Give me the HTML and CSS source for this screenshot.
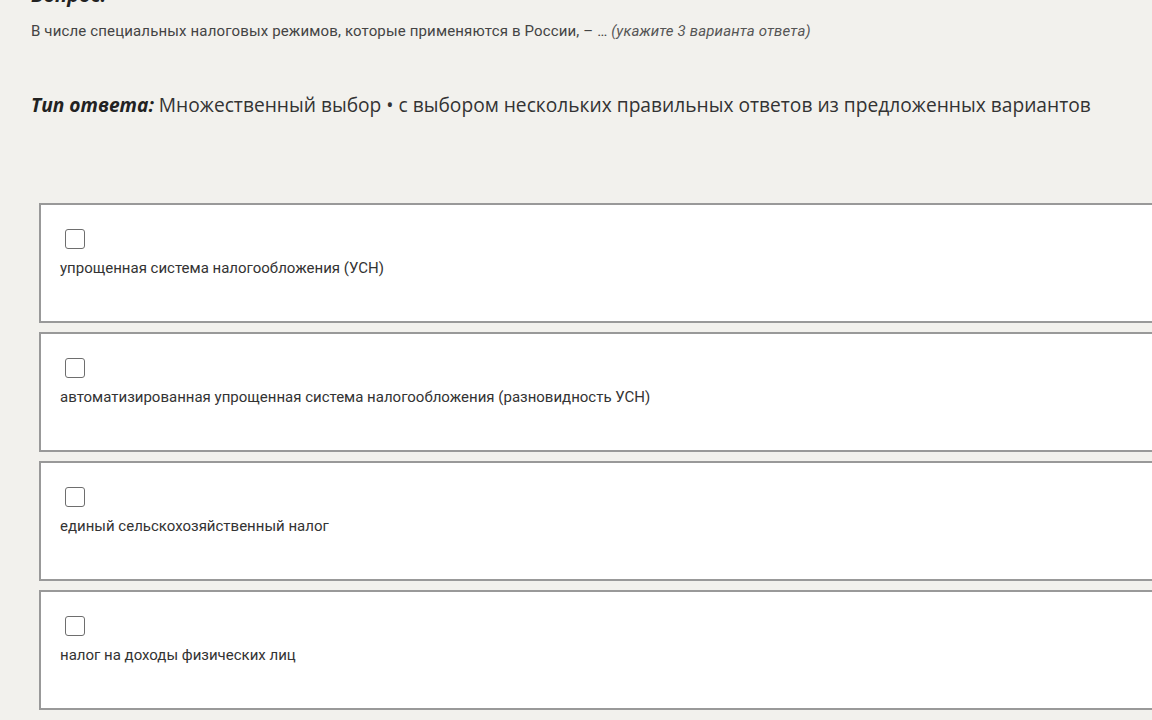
FILE: index.html
```html
<!DOCTYPE html>
<html>
<head>
    <meta charset="utf-8">
    <title>Вопрос</title>
    <link rel="stylesheet" href="styles.css">
</head>
<body>
    <div class="question-page">
        <h2 class="question-title">Вопрос:</h2>
        <p class="question-text">В числе специальных налоговых режимов, которые применяются в России, – … <em>(укажите 3 варианта ответа)</em></p>

        <p class="answer-type"><strong><em>Тип ответа:</em></strong> Множественный выбор • с выбором нескольких правильных ответов из предложенных вариантов</p>

        <div class="options">
            <label class="option">
                <span class="checkbox"></span>
                <span class="option-text">упрощенная система налогообложения (УСН)</span>
            </label>
            <label class="option">
                <span class="checkbox"></span>
                <span class="option-text">автоматизированная упрощенная система налогообложения (разновидность УСН)</span>
            </label>
            <label class="option">
                <span class="checkbox"></span>
                <span class="option-text">единый сельскохозяйственный налог</span>
            </label>
            <label class="option">
                <span class="checkbox"></span>
                <span class="option-text">налог на доходы физических лиц</span>
            </label>
        </div>
    </div>
</body>
</html>
```

FILE: styles.css
```css
body {
    margin: 0;
    padding: 0;
    background-color: #f2f1ed;
    color: #333;
    font-family: Roboto, "Liberation Sans", sans-serif;
    overflow: hidden;
}
.question-page {
    margin-top: -17px;
    padding-left: 31px;
}
.question-title {
    margin: 0;
    font-family: "Open Sans", sans-serif;
    font-size: 20px;
    font-style: italic;
    font-weight: 700;
    line-height: 24px;
    color: #222;
}
.question-text {
    margin: 14px 0 0;
    font-size: 15px;
    letter-spacing: 0.15px;
    line-height: 20px;
    color: #444;
}
.question-text em {
    color: #555;
}
.answer-type {
    margin: 50px 0 0;
    font-family: "Open Sans", sans-serif;
    font-size: 19.2px;
    line-height: 28px;
    color: #333;
}
.answer-type strong {
    color: #222;
}
.options {
    margin-top: 84px;
    margin-left: 8px;
    display: flex;
    flex-direction: column;
    gap: 9px;
}
.option {
    display: flex;
    flex-direction: column;
    align-items: flex-start;
    width: 1200px;
    height: 120px;
    box-sizing: border-box;
    padding: 24px 19px 0;
    background-color: #fff;
    border: 2px solid #999;
}
.checkbox {
    width: 18px;
    height: 18px;
    margin-left: 5px;
    border: 1.5px solid #6e6e6e;
    border-radius: 3px;
    background-color: #fff;
}
.option-text {
    margin-top: 9px;
    font-size: 15px;
    line-height: 20px;
    color: #333;
}
```
